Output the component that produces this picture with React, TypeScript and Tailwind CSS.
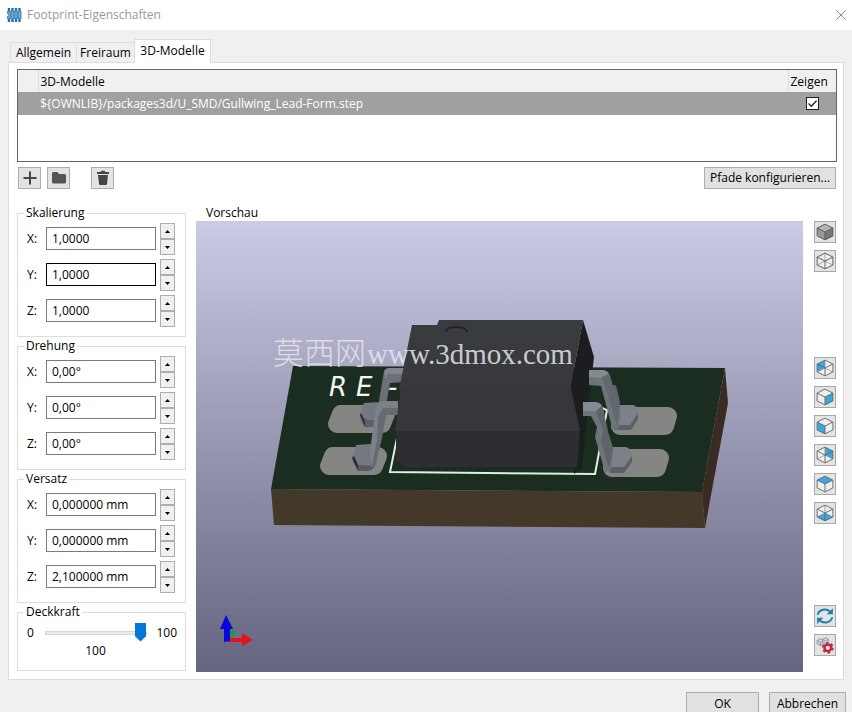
import type { ReactNode } from 'react';
import { X } from 'lucide-react';

type AxisField = {
  axis: string;
  value: string;
  active?: boolean;
};

type CubeFace = 'backLeft' | 'right' | 'left' | 'backRight' | 'top' | 'bottom';

const scaleFields: AxisField[] = [
  { axis: 'X:', value: '1,0000' },
  { axis: 'Y:', value: '1,0000', active: true },
  { axis: 'Z:', value: '1,0000' },
];

const rotationFields: AxisField[] = [
  { axis: 'X:', value: '0,00°' },
  { axis: 'Y:', value: '0,00°' },
  { axis: 'Z:', value: '0,00°' },
];

const offsetFields: AxisField[] = [
  { axis: 'X:', value: '0,000000 mm' },
  { axis: 'Y:', value: '0,000000 mm' },
  { axis: 'Z:', value: '2,100000 mm' },
];

const facePoints: Record<CubeFace, string> = {
  backLeft: '1,4.5 8,1 8,8 1,11.5',
  right: '8,8 15,4.5 15,11.5 8,15',
  left: '1,4.5 8,8 8,15 1,11.5',
  backRight: '8,1 15,4.5 15,11.5 8,8',
  top: '8,1 15,4.5 8,8 1,4.5',
  bottom: '1,11.5 8,8 15,11.5 8,15',
};

const viewButtons: { face: CubeFace; label: string }[] = [
  { face: 'backLeft', label: 'Ansicht von links' },
  { face: 'right', label: 'Ansicht von rechts' },
  { face: 'left', label: 'Ansicht von vorne' },
  { face: 'backRight', label: 'Ansicht von hinten' },
  { face: 'top', label: 'Ansicht von oben' },
  { face: 'bottom', label: 'Ansicht von unten' },
];

export default function App() {
  return (
    <div className="flex h-screen flex-col overflow-hidden bg-[#f0f0f0] font-['Open_Sans','Noto_Sans',sans-serif] text-[12px] leading-[14px] text-black">
      <header className="flex h-[30px] shrink-0 items-center bg-white pr-0.5 pl-1.5">
        <ChipIcon />
        <h1 className="ml-[5px] flex-1 text-[#999]">Footprint-Eigenschaften</h1>
        <button type="button" aria-label="Schließen" className="text-[#888]">
          <X size={18} strokeWidth={1.3} />
        </button>
      </header>

      <div role="tablist" className="flex shrink-0 items-end px-2.5 pt-[9px]">
        <Tab label="Allgemein" width="w-[66px]" />
        <Tab label="Freiraum" width="w-[58px]" />
        <Tab label="3D-Modelle" width="w-[77px]" selected />
      </div>

      <main className="mx-2 shrink-0 border border-[#dcdcdc] bg-white pt-1.5 pr-1.5 pb-[7px] pl-2">
        <ModelTable />

        <div className="mt-[5px] mr-px flex items-center">
          <ToolButton label="Modell hinzufügen">
            <svg viewBox="0 0 16 16" className="size-4" stroke="#454545" strokeWidth="2">
              <path d="M8 1.5v13M1.5 8h13" />
            </svg>
          </ToolButton>
          <ToolButton label="Ordner öffnen" className="ml-1.5">
            <svg viewBox="0 0 16 16" className="size-4" fill="#545454">
              <path d="M1 3.5q0-1.5 1.5-1.5h4l1.5 2h5.500q1.500 0 1.500 1.500v6.500q0 1.500-1.500 1.500h-11q-1.500 0-1.500-1.500z" />
            </svg>
          </ToolButton>
          <ToolButton label="Modell entfernen" className="ml-[21px]">
            <svg viewBox="0 0 16 16" className="size-4" fill="#454545">
              <path d="M2 2h3.500l1-1.200h3l1 1.200h3.500v2h-12zM3 5h10l-1 9q-.2 1-1.200 1h-5.600q-1 0-1.200-1z" />
            </svg>
          </ToolButton>
          <PushButton className="ml-auto h-[22px] w-[132px]">Pfade konfigurieren...</PushButton>
        </div>

        <div className="mt-[17px] flex items-stretch">
          <div className="flex w-[169px] shrink-0 flex-col gap-0.5">
            <AxisGroup title="Skalierung" fields={scaleFields} />
            <AxisGroup title="Drehung" fields={rotationFields} />
            <AxisGroup title="Versatz" fields={offsetFields} />
            <OpacityGroup />
          </div>

          <section className="ml-2.5 flex min-w-0 flex-1 flex-col">
            <h2 className="mb-px px-2.5">Vorschau</h2>
            <Preview />
          </section>

          <div className="mr-px ml-[11px] flex shrink-0 flex-col gap-[7px] pt-[15px]">
            <ViewButton label="Orthogonale Projektion">
              <CubeIcon shaded />
            </ViewButton>
            <ViewButton label="Begrenzungsrahmen">
              <CubeIcon />
            </ViewButton>
            <div className="h-[71px]" />
            {viewButtons.map((view) => (
              <ViewButton key={view.face} label={view.label}>
                <CubeIcon face={view.face} />
              </ViewButton>
            ))}
            <div className="h-[67px]" />
            <ViewButton label="Ansicht neu laden">
              <ReloadIcon />
            </ViewButton>
            <ViewButton label="Vorschau-Optionen">
              <OptionsIcon />
            </ViewButton>
          </div>
        </div>
      </main>

      <footer className="flex shrink-0 justify-end gap-2.5 pt-3 pr-1.5">
        <PushButton className="h-6 w-[73px]">OK</PushButton>
        <PushButton className="h-6 w-[77px]">Abbrechen</PushButton>
      </footer>
    </div>
  );
}

type TabProps = {
  label: string;
  width: string;
  selected?: boolean;
};

function Tab({ label, width, selected = false }: TabProps) {
  return (
    <button
      type="button"
      role="tab"
      aria-selected={selected}
      className={`border border-b-0 border-[#dcdcdc] text-center whitespace-nowrap ${width} ${
        selected ? 'relative -mb-px h-6 bg-white pb-0.5' : 'h-5 border-r-0'
      }`}
    >
      {label}
    </button>
  );
}

function ModelTable() {
  return (
    <div className="h-[93px] border border-[#646464] bg-white">
      <table className="w-full table-fixed border-collapse">
        <thead>
          <tr className="h-[22px] bg-[#f0f0f0] text-left">
            <th className="w-5 border-r border-[#dcdcdc]" />
            <th className="px-0.5 pt-0.5 font-normal">3D-Modelle</th>
            <th className="w-12 border-l border-[#dcdcdc] px-0.5 pt-0.5 font-normal">Zeigen</th>
          </tr>
        </thead>
        <tbody>
          <tr className="h-[23px] bg-[#a0a0a0] text-white">
            <td />
            <td className="px-0.5">{'${OWNLIB}/packages3d/U_SMD/Gullwing_Lead-Form.step'}</td>
            <td>
              <label className="relative mx-auto block size-[13px]">
                <input
                  type="checkbox"
                  defaultChecked
                  aria-label="Zeigen"
                  className="peer block size-[13px] appearance-none border border-[#222] bg-white"
                />
                <svg
                  viewBox="0 0 13 13"
                  className="pointer-events-none absolute inset-0 hidden size-[13px] peer-checked:block"
                  fill="none"
                  stroke="#222"
                  strokeWidth="1.3"
                >
                  <path d="M2.500 6.500l2.800 2.800 5.200-5.600" />
                </svg>
              </label>
            </td>
          </tr>
        </tbody>
      </table>
    </div>
  );
}

type ButtonProps = {
  label: string;
  className?: string;
  children: ReactNode;
};

function ToolButton({ label, className = 'ml-px', children }: ButtonProps) {
  return (
    <button
      type="button"
      aria-label={label}
      className={`flex h-[22px] w-[23px] items-center justify-center border border-[#adadad] bg-[#e3e3e3] ${className}`}
    >
      {children}
    </button>
  );
}

function ViewButton({ label, children }: ButtonProps) {
  return (
    <button
      type="button"
      aria-label={label}
      className="flex size-[22px] items-center justify-center border border-[#a8a8a8] bg-[#e3e3e3]"
    >
      {children}
    </button>
  );
}

function PushButton({ className, children }: { className: string; children: ReactNode }) {
  return (
    <button type="button" className={`border border-[#adadad] bg-[#e1e1e1] whitespace-nowrap ${className}`}>
      {children}
    </button>
  );
}

function AxisGroup({ title, fields }: { title: string; fields: AxisField[] }) {
  return (
    <fieldset className="border border-[#dcdcdc] pt-[3px] pb-[9px]">
      <legend className="ml-1.5 px-0.5">{title}</legend>
      <div className="flex flex-col gap-1">
        {fields.map((field) => (
          <div key={field.axis} className="flex h-8 pr-2.5 pl-[9px]">
            <label className="flex flex-1 items-center pt-1 pb-[5px]">
              <span className="w-[19px]">{field.axis}</span>
              <input
                type="text"
                defaultValue={field.value}
                className={`h-[23px] w-[110px] border bg-white px-[5px] outline-none ${
                  field.active ? 'border-black' : 'border-[#7a7a7a]'
                }`}
              />
            </label>
            <div className="flex flex-col">
              <SpinButton label={`${title} ${field.axis} erhöhen`} points="0,4 3.5,0 7,4" />
              <SpinButton label={`${title} ${field.axis} verringern`} points="0,0 7,0 3.5,4" />
            </div>
          </div>
        ))}
      </div>
    </fieldset>
  );
}

function SpinButton({ label, points }: { label: string; points: string }) {
  return (
    <button
      type="button"
      aria-label={label}
      className="flex h-4 w-[15px] items-center justify-center border border-[#adadad] bg-[#f0f0f0]"
    >
      <svg viewBox="0 0 7 4" className="h-[3px] w-[5px]">
        <polygon points={points} />
      </svg>
    </button>
  );
}

function OpacityGroup() {
  return (
    <fieldset className="border border-[#dcdcdc] pt-1 pb-3">
      <legend className="ml-1.5 px-0.5">Deckkraft</legend>
      <div className="flex items-center pr-2 pl-[9px]">
        <span className="w-[18px]">0</span>
        <input
          type="range"
          min={0}
          max={100}
          defaultValue={100}
          aria-label="Deckkraft"
          className="h-[19px] w-[102px] appearance-none bg-transparent [&::-webkit-slider-runnable-track]:h-1 [&::-webkit-slider-runnable-track]:border [&::-webkit-slider-runnable-track]:border-[#d6d6d6] [&::-webkit-slider-runnable-track]:bg-[#e7eaea] [&::-webkit-slider-thumb]:-mt-[9px] [&::-webkit-slider-thumb]:h-[19px] [&::-webkit-slider-thumb]:w-[11px] [&::-webkit-slider-thumb]:appearance-none [&::-webkit-slider-thumb]:bg-[#0078d7] [&::-webkit-slider-thumb]:[clip-path:polygon(0_0,100%_0,100%_72%,50%_100%,0_72%)]"
        />
        <span className="ml-auto">100</span>
      </div>
      <output className="mt-0.5 block pr-3 text-center">100</output>
    </fieldset>
  );
}

function Preview() {
  return (
    <svg
      viewBox="196 221 607 451"
      preserveAspectRatio="xMidYMid slice"
      className="min-h-0 w-full flex-1 bg-linear-to-b from-[#cbcbe5] to-[#656580]"
    >
      <defs>
        <linearGradient id="bodyTop" x1="0" y1="0" x2="0" y2="1">
          <stop offset="0" stopColor="#393c3e" />
          <stop offset="1" stopColor="#37383d" />
        </linearGradient>
      </defs>

      {/* board */}
      <polygon points="293,366 725,368 702,492 271,489" fill="#1b2d20" />
      <polygon points="271,489 702,492 705,528 274,525" fill="#443828" />
      <polygon points="725,368 728,403 705,528 702,492" fill="#392b22" />

      {/* pads */}
      <g fill="#858584" stroke="#858584" strokeWidth="18" strokeLinejoin="round">
        <polygon points="341,414 386,414 382,424 337,424" />
        <polygon points="333,456 378,456 374,466 329,466" />
        <polygon points="622,416 668,416 665,426 620,426" />
        <polygon points="614,458 660,458 657,468 612,468" />
      </g>

      {/* silkscreen */}
      <g fill="#f1f6ee" fontFamily="DejaVu Sans, sans-serif" fontStyle="italic" fontSize="26">
        <text x="329" y="396">R</text>
        <text x="356" y="396">E</text>
        <text x="388" y="396">-</text>
      </g>
      <path d="M398 433L390 472L595 474L607 410L602 408" fill="none" stroke="#dfeedf" strokeWidth="2" />

      {/* left leads, rear then front */}
      <path d="M360 414l4-11 18-1 2 22-18 4-6-6z" fill="#747981" />
      <path d="M360 415l5 12 17 0 0-7-14 0z" fill="#5b6066" />
      <path d="M360 415l5 12v-5l-4-9z" fill="#292b32" />
      <path d="M384 371q2-3 5-3h15v14l-14 1-4 23-8 1z" fill="#6c7076" />
      <path d="M384 371q2-3 5-3h15v6h-15q-3 1-3 7z" fill="#81858c" />
      <path d="M352 458l4-13 15-1 6 20-9 7h-10z" fill="#747981" />
      <path d="M352 460l6 11h10q5-1 7-5l-17-1z" fill="#565b61" />
      <path d="M352 458l6 12v-5l-4-9z" fill="#292b32" />
      <path d="M376 407q1-5 6-6h16v14h-12l-4 23-6 26q-2 4-5 5l1-24 3-14z" fill="#666b71" />
      <path d="M376 407q1-5 6-6h16v7h-15l-5 9-1 23-5 27-2-17z" fill="#7c8087" />

      {/* package */}
      <path d="M583 320l11 37-5 43-12 67-5-38-2-39z" fill="#1c1d1f" />
      <path d="M580 430l9-32-7 70-8 6z" fill="#17211c" />
      <path d="M396 428h184l-3 39H404l-8-8z" fill="#2e2d31" />
      <path d="M401 388h170l9 43H395z" fill="#37373b" />
      <path d="M412 325h25l2-5 144 0-13 70H399z" fill="url(#bodyTop)" />
      <path d="M446 332q0-5 10-5t11 5" fill="none" stroke="#222427" strokeWidth="2" />

      {/* right leads, rear then front */}
      <path d="M611 386l5-1 4 17-2 17z" fill="#5f6467" />
      <path d="M617 405l16 0q6 2 5 9l-7 12-16-1z" fill="#7c8087" />
      <path d="M612 425h18l8-12v6l-7 11h-17z" fill="#5b5f67" />
      <path d="M589 370h14q5 1 7 6l9 32 2 10-4 12-5-3-11-41-12-1z" fill="#6f747b" />
      <path d="M589 370h14q5 1 6 4l-9 4-11-1z" fill="#858990" />
      <path d="M609 374l11 33-3 18-12-40-3-8z" fill="#626870" />
      <path d="M612 447h14q6 2 5 9l-7 12-15-1z" fill="#7c8087" />
      <path d="M608 467h16l8-11v6l-8 11h-14z" fill="#5b5f67" />
      <path d="M583 402h13q5 1 7 6l5 24 5 16-2 22-6 2-10-35 2-10-6-11h-8z" fill="#6f747b" />
      <path d="M583 402h13q5 1 6 4l-6 5h-13z" fill="#858990" />
      <path d="M602 406l6 28 5 15-4 20-8-28 2-10-7-20z" fill="#5e646a" />

      {/* axis gizmo */}
      <path d="M229 638l5-8" stroke="#10a040" strokeWidth="4" />
      <path d="M228 638h14v-5l11 7-11 6v-4h-14z" fill="#e3141c" />
      <path d="M224 642v-13h-4l6-14 7 14h-3v12z" fill="#0707dc" />

      <g fill="#e6e6ec" fillOpacity="0.85">
        <text x="273" y="364" fontSize="31" fontWeight="300" fontFamily="Noto Sans CJK SC, sans-serif">
          莫西网
        </text>
        <text x="367" y="364" fontSize="29" fontFamily="Liberation Serif, serif">
          www.3dmox.com
        </text>
      </g>
    </svg>
  );
}

function CubeIcon({ face, shaded = false }: { face?: CubeFace; shaded?: boolean }) {
  const seeThrough = face === 'backLeft' || face === 'backRight' || face === 'bottom';

  return (
    <svg viewBox="0 0 16 16" className="size-[18px]" strokeLinejoin="round">
      <polygon points="8,1 15,4.5 15,11.5 8,15 1,11.5 1,4.5" fill={shaded ? '#989898' : '#efefef'} />
      {shaded && <polygon points={facePoints.right} fill="#777" />}
      {shaded && <polygon points={facePoints.top} fill="#b5b5b5" />}
      {face && <polygon points={facePoints[face]} fill="#37a9df" />}
      {(seeThrough || (!face && !shaded)) && (
        <path d="M8 1v7M1 11.5L8 8l7 3.5" fill="none" stroke="#8a8078" strokeWidth="0.6" />
      )}
      <path
        d="M8 1l7 3.500v7L8 15l-7-3.500v-7zM1 4.500L8 8l7-3.500M8 8v7"
        fill="none"
        stroke={face ? '#5f6468' : '#555'}
        strokeWidth="0.8"
      />
    </svg>
  );
}

function ReloadIcon() {
  return (
    <svg viewBox="0 0 16 16" className="size-[18px]" fill="none" stroke="#1a81ad" strokeWidth="1.7">
      <path d="M1.500 7A6.500 6 0 0 1 12.500 4M14.500 9A6.500 6 0 0 1 3.500 12" />
      <path d="M15 1v5.500h-5.500zM1 15V9.500h5.500z" fill="#1a81ad" stroke="none" />
    </svg>
  );
}

function OptionsIcon() {
  return (
    <svg viewBox="0 0 16 16" className="size-[18px]">
      <g fill="#c9d4dc" stroke="#7e8c96" strokeWidth="0.7">
        <path d="M1 4l3-1.500L7 4v3L4 8.500 1 7zM1 4l3 1.500L7 4M4 5.500v3" />
        <path d="M6 3l2.500-1.500L11 3v3L8.500 7.500 6 6zM6 3l2.500 1.300L11 3" />
      </g>
      <circle cx="10.5" cy="10.5" r="3" fill="none" stroke="#c22940" strokeWidth="2.2" />
      <circle cx="10.5" cy="10.5" r="4.5" fill="none" stroke="#c22940" strokeWidth="1.5" strokeDasharray="2.35 2.35" />
    </svg>
  );
}

function ChipIcon() {
  return (
    <svg viewBox="0 0 16 16" className="size-4">
      <path d="M3 1v14M6.500 1v14M10 1v14M13.500 1v14" stroke="#2c6ea3" strokeWidth="2.4" />
      <rect x="1" y="4" width="14.5" height="8" fill="#4d8fc0" />
      <path d="M3 5v6M6.500 5v6M10 5v6M13.500 5v6" stroke="#82b4d8" />
      <path d="M1 6.500q2 1.500 0 3z" fill="#fff" />
    </svg>
  );
}
